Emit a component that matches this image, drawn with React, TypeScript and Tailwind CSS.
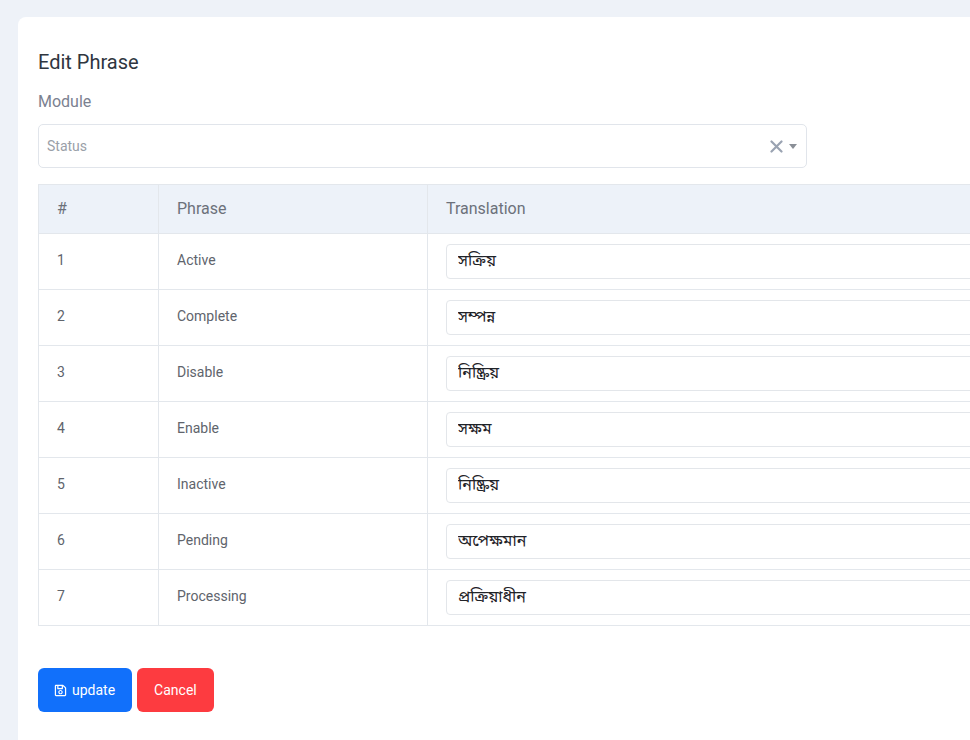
import { FaRegSave } from 'react-icons/fa';

const rows = [
  { id: 1, phrase: 'Active', translation: 'সক্রিয়' },
  { id: 2, phrase: 'Complete', translation: 'সম্পন্ন' },
  { id: 3, phrase: 'Disable', translation: 'নিষ্ক্রিয়' },
  { id: 4, phrase: 'Enable', translation: 'সক্ষম' },
  { id: 5, phrase: 'Inactive', translation: 'নিষ্ক্রিয়' },
  { id: 6, phrase: 'Pending', translation: 'অপেক্ষমান' },
  { id: 7, phrase: 'Processing', translation: 'প্রক্রিয়াধীন' },
];

export default function App() {
  return (
    <div className="w-[970px] h-[740px] overflow-hidden bg-[#eef2f8] font-['Roboto',sans-serif]">
      <div className="ml-[18px] mt-[17px] w-[1200px] min-h-[760px] bg-white rounded-lg px-5 pt-[33px]">
        <h1 className="text-[20px] leading-6 text-[#2f3640]">Edit Phrase</h1>

        <label className="block mt-[18px] text-[16px] leading-5 text-[#7b8190]">Module</label>

        <div className="mt-[12px] w-[769px] h-[44px] border border-[#e1e5eb] rounded-[5px] flex items-center pl-2 pr-[9px]">
          <span className="flex-1 text-[14px] text-[#9aa0a8]">Status</span>
          <svg width="13" height="13" viewBox="0 0 13 13" className="mr-[6px]">
            <path d="M1.5 1.5 L11.5 11.5 M11.5 1.5 L1.5 11.5" stroke="#9aa3b2" strokeWidth="2.2" strokeLinecap="round" />
          </svg>
          <svg width="8" height="5" viewBox="0 0 8 5">
            <path d="M0 0 H8 L4 5 Z" fill="#8a8f97" />
          </svg>
        </div>

        <table className="mt-4 w-[1160px] border-collapse text-left">
          <thead>
            <tr className="bg-[#edf2f9] h-[49px]">
              <th className="w-[120px] border border-[#e3e7ec] px-[18px] font-normal text-[16px] text-[#6c717b]">#</th>
              <th className="w-[269px] border border-[#e3e7ec] px-[18px] font-normal text-[16px] text-[#6c717b]">Phrase</th>
              <th className="border border-[#e3e7ec] px-[18px] font-normal text-[16px] text-[#6c717b]">Translation</th>
            </tr>
          </thead>
          <tbody>
            {rows.map((row) => (
              <tr key={row.id} className="h-[56px]">
                <td className="border border-[#e3e7ec] px-[18px] text-[14px] text-[#60646c] align-top pt-[16px]">{row.id}</td>
                <td className="border border-[#e3e7ec] px-[18px] text-[14px] text-[#60646c] align-top pt-[16px]">{row.phrase}</td>
                <td className="border border-[#e3e7ec] px-[18px] align-middle">
                  <input
                    defaultValue={row.translation}
                    className="w-full h-[35px] border border-[#e3e6ea] rounded-[4px] px-[11px] text-[16px] text-[#1f2328] outline-none font-['Noto_Sans_Bengali','Lohit_Bengali','Noto_Sans',sans-serif]"
                  />
                </td>
              </tr>
            ))}
          </tbody>
        </table>

        <div className="mt-[42px] flex gap-[5px]">
          <button className="h-[44px] pl-4 pr-[17px] rounded-[6px] bg-[#1170fb] text-white text-[14px] flex items-center gap-[5px]">
            <FaRegSave className="w-[13px] h-[13px]" />
            update
          </button>
          <button className="h-[44px] px-[17px] rounded-[6px] bg-[#fd3b40] text-white text-[14px]">Cancel</button>
        </div>
      </div>
    </div>
  );
}
